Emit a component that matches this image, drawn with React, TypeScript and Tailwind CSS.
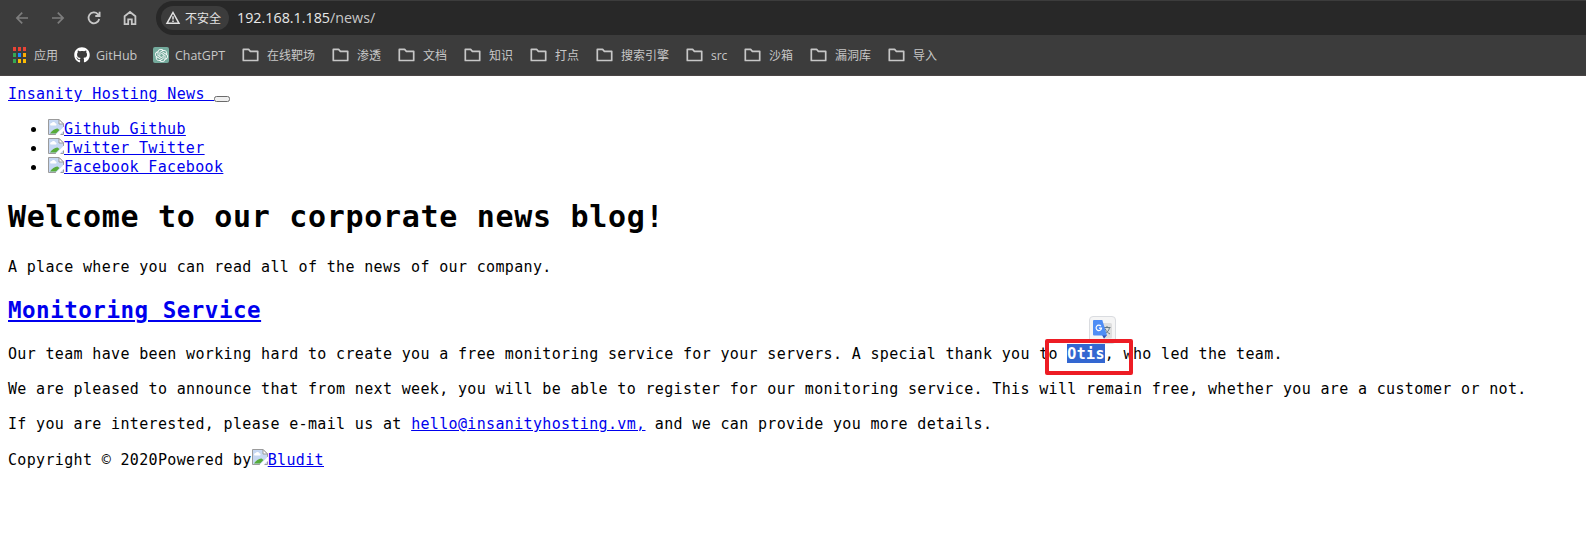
import React from 'react';
import { SiOpenai } from 'react-icons/si';
import { FaGithub } from 'react-icons/fa';

const CJK = "font-['Open_Sans','Noto_Sans_CJK_SC',sans-serif]";

function Folder() {
  return (
    <svg width="18" height="14" viewBox="0 0 18 14" fill="none" stroke="#c7c7c7" strokeWidth="1.7" strokeLinejoin="round" className="shrink-0">
      <path d="M1.3 1.4H6.6L8.4 3.3H15.7V12.5H1.3Z" />
    </svg>
  );
}

const folders = [
  { name: '在线靶场', w: 'w-[90px]' },
  { name: '渗透', w: 'w-[66px]' },
  { name: '文档', w: 'w-[66px]' },
  { name: '知识', w: 'w-[66px]' },
  { name: '打点', w: 'w-[66px]' },
  { name: '搜索引擎', w: 'w-[90px]' },
  { name: 'src', w: 'w-[58px]' },
  { name: '沙箱', w: 'w-[66px]' },
  { name: '漏洞库', w: 'w-[78px]' },
  { name: '导入', w: 'w-[66px]' },
];

const appColors = ['#ea4335', '#ea4335', '#ea4335', '#34a853', '#1a8cff', '#fbac04', '#34a853', '#fbbc04', '#fbbc04'];

function BrokenImage() {
  return (
    <svg width="16" height="16" viewBox="0 0 16 16" className="-mt-px shrink-0">
      <path d="M.5 .5H11L15.5 5V15.5H.5Z" fill="#c6d8f3" />
      <path d="M2.5 6.5a1.5 1.5 0 0 1 1.2-2.5a2 2 0 0 1 3.6 .3a1.2 1.2 0 0 1 .7 2.2Z" fill="#fff" />
      <path d="M2 14.5C4 11.5 7 9.3 9.5 9.5L11.5 11L8 14.5Z" fill="#57ab3a" />
      <path d="M.5 15.5V.5H11L15.5 5V8M.5 15.5H8M15.5 12.5V15.5H12.5" fill="none" stroke="#9b9b9b" />
      <path d="M11 .5V5H15.5Z" fill="#fff" stroke="#9b9b9b" />
      <path d="M16 7.5L7.5 16H11.5L16 11.5Z" fill="#fff" />
    </svg>
  );
}

function Toolbar() {
  return (
    <div className="flex h-[35px] items-center">
      <div className="flex w-[156px] shrink-0 items-center gap-4 pl-[12px]">
        <svg width="20" height="20" viewBox="0 0 20 20" fill="none" stroke="#7d7d7d" strokeWidth="1.7"><path d="M16 10H5M10.2 4.7L4.9 10L10.2 15.3" /></svg>
        <svg width="20" height="20" viewBox="0 0 20 20" fill="none" stroke="#7d7d7d" strokeWidth="1.7"><path d="M4 10H15M9.8 4.7L15.1 10L9.8 15.3" /></svg>
        <svg width="20" height="20" viewBox="0 0 20 20" fill="none" stroke="#c7c7c7" strokeWidth="1.8"><path d="M15.2 11A5.4 5.4 0 1 1 13.8 6.1L15.5 7.8M15.6 3.8V8H11.3" /></svg>
        <svg width="20" height="20" viewBox="0 0 20 20" fill="none" stroke="#c7c7c7" strokeWidth="1.8"><path d="M4.6 8.3L10 4L15.4 8.3V16.2H11.8V11.4H8.2V16.2H4.6Z" /></svg>
      </div>
      <div className="mt-px flex h-[34px] flex-1 items-center rounded-l-full bg-[#282828] pl-[5px]">
        <div className="flex h-6 w-[68px] items-center gap-[4px] rounded-full bg-[#3c3c3c] pl-[4px]">
          <svg width="16" height="16" viewBox="0 0 16 16" fill="none" stroke="#e3e3e3" strokeWidth="1.5"><path d="M8 2.5L14 13.3H2Z M8 6.3V9.6M8 10.6V12" /></svg>
          <span className={`${CJK} pt-[2px] text-[12px] leading-none whitespace-nowrap text-[#e3e3e3]`}>不安全</span>
        </div>
        <span className={`${CJK} ml-[8px] text-[14.3px] leading-none text-[#e8e8e8]`}>192.168.1.185<span className="text-[#c7c7c7]">/news/</span></span>
      </div>
    </div>
  );
}

function Bookmarks() {
  return (
    <div className={`flex h-[40px] items-center text-[12px] leading-none whitespace-nowrap text-[#c7c7c7] ${CJK}`}>
      <div className="flex w-[74px] items-center gap-[8px] pl-[13px]">
        <div className="grid grid-cols-3 gap-x-[2px] gap-y-[2px]">
          {appColors.map((c, i) => <i key={i} className="h-[4px] w-[3px]" style={{ background: c }} />)}
        </div>
        <span className="pt-[2px]">应用</span>
      </div>
      <div className="flex w-[79px] items-center gap-[6px]"><FaGithub size={16} color="#fff" /><span className="pt-[2px] text-[12.5px]">GitHub</span></div>
      <div className="flex w-[89px] items-center gap-[6px]">
        <span className="flex size-4 items-center justify-center rounded-[2px] bg-[#74aa9c]"><SiOpenai size={13} color="#fff" /></span>
        <span className="pt-[2px] text-[12.4px]">ChatGPT</span>
      </div>
      {folders.map((f) => (
        <div key={f.name} className={`flex items-center gap-[7px] ${f.w}`}><Folder /><span className="pt-[2px]">{f.name}</span></div>
      ))}
    </div>
  );
}

function Translate() {
  return (
    <svg width="19" height="19" viewBox="0 0 19 19">
      <path d="M8 3H17.5Q19 3 19 4.5V17Q19 18.5 17.5 18.5H12Z" fill="#dedede" />
      <path d="M10.5 7.5H17.5M14 6V7.5M16.5 7.5C16 11 13.5 13 11.5 14M12 8.5C13 11 15 13 17 14" stroke="#667a84" fill="none" />
      <path d="M9 15H14L11 18.8Z" fill="#3051b5" />
      <path d="M1 0H9.3L14 15.5H1Q0 15.5 0 14.5V1Q0 0 1 0Z" fill="#4f8df5" />
      <path d="M7.9 6.1A2.7 2.7 0 1 0 8.5 8.2H6" fill="none" stroke="#fff" strokeWidth="1.2" />
    </svg>
  );
}

const link = 'text-[#0000ee] underline';

export default function App() {
  return (
    <div className="h-[547px] w-[1586px] overflow-hidden bg-white">
      <header className="h-[76px] border-b border-[#4a4545] bg-[#3c3c3c]">
        <Toolbar />
        <Bookmarks />
      </header>
      <main className="px-2 pt-[9px] font-['DejaVu_Sans_Mono',monospace] text-[15px] leading-[19px] tracking-[0.344px] whitespace-pre text-black">
        <div className="flex h-[19px]">
          <a className={link}>{'Insanity Hosting News '}</a>
          <button className="mt-[11px] h-[6px] w-4 rounded-[2.5px] border border-[#6b6b6b] bg-[#efefef]" />
        </div>
        <ul className="mt-4">
          {['Github', 'Twitter', 'Facebook'].map((n) => (
            <li key={n} className="flex h-[19px]">
              <span className="-mt-px flex w-10 items-center pl-[23px]"><i className="size-[5px] rounded-full bg-black" /></span>
              <BrokenImage />
              <a className={link}>{`${n} ${n}`}</a>
            </li>
          ))}
        </ul>
        <h1 className="mt-[21px] text-[30px] leading-[38px] font-bold tracking-[0.69px]">Welcome to our corporate news blog!</h1>
        <p className="mt-[22px]">A place where you can read all of the news of our company.</p>
        <h2 className="mt-[19px] text-[22.5px] leading-[28px] font-bold tracking-[0.515px]"><a className={link}>Monitoring Service</a></h2>
        <p className="mt-[21px]">
          Our team have been working hard to create you a free monitoring service for your servers. A special thank you to{' '}
          <span className="relative -mt-px inline-block h-[19px] bg-[#3367d1] align-top leading-[21px] font-bold text-white">
            Otis
            <span className="absolute -top-[28px] left-[22px] flex h-[28px] w-[27px] rounded-[4px] border border-[#dadce0] bg-[#f5f5f5] pt-[3px] pl-[3px]"><Translate /></span>
            <span className="absolute -top-[5px] -left-[22px] h-[36px] w-[88px] rounded-[2px] border-4 border-[#ed1c24]" />
          </span>
          , who led the team.
        </p>
        <p className="mt-4">We are pleased to announce that from next week, you will be able to register for our monitoring service. This will remain free, whether you are a customer or not.</p>
        <p className="mt-4">If you are interested, please e-mail us at <a className={link}>hello@insanityhosting.vm,</a> and we can provide you more details.</p>
        <div className="mt-[17px] flex h-[19px]">Copyright © 2020Powered by<span className="-mt-px flex items-start"><BrokenImage /></span><a className={link}>Bludit</a></div>
      </main>
    </div>
  );
}
